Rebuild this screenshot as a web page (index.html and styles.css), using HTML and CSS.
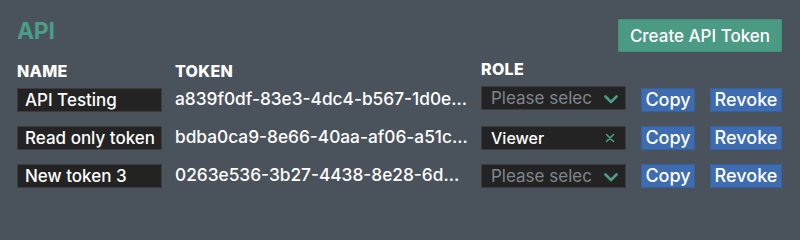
FILE: index.html
```html
<!DOCTYPE html>
<html>
<head>
<meta charset="utf-8">
<link rel="stylesheet" href="styles.css">
</head>
<body>
<div class="page">
  <div class="topbar">
    <h1 class="title">API</h1>
    <button class="btn-create">Create API Token</button>
  </div>
  <div class="tokens">
    <div class="row head">
      <div class="th">NAME</div>
      <div class="th">TOKEN</div>
      <div class="th role-head">ROLE</div>
      <div></div>
      <div></div>
    </div>
    <div class="row">
      <div class="name-input">API Testing</div>
      <div class="token">a839f0df-83e3-4dc4-b567-1d0e...</div>
      <div class="select first"><span class="placeholder">Please selec</span><svg class="chev" viewBox="0 0 14 9"><path d="M1.5 1.5 L7 7 L12.5 1.5" fill="none" stroke="#4a9d87" stroke-width="2.6" stroke-linecap="round" stroke-linejoin="round"/></svg></div>
      <div><button class="btn-blue copy">Copy</button></div>
      <div><button class="btn-blue revoke">Revoke</button></div>
    </div>
    <div class="row">
      <div class="name-input">Read only token</div>
      <div class="token">bdba0ca9-8e66-40aa-af06-a51c...</div>
      <div class="select"><span class="value">Viewer</span><svg class="clear" viewBox="0 0 10 10"><path d="M1.5 1.5 L8.5 8.5 M8.5 1.5 L1.5 8.5" fill="none" stroke="#4a9d87" stroke-width="1.6" stroke-linecap="round"/></svg></div>
      <div><button class="btn-blue copy">Copy</button></div>
      <div><button class="btn-blue revoke">Revoke</button></div>
    </div>
    <div class="row">
      <div class="name-input">New token 3</div>
      <div class="token">0263e536-3b27-4438-8e28-6d...</div>
      <div class="select"><span class="placeholder">Please selec</span><svg class="chev" viewBox="0 0 14 9"><path d="M1.5 1.5 L7 7 L12.5 1.5" fill="none" stroke="#4a9d87" stroke-width="2.6" stroke-linecap="round" stroke-linejoin="round"/></svg></div>
      <div><button class="btn-blue copy">Copy</button></div>
      <div><button class="btn-blue revoke">Revoke</button></div>
    </div>
  </div>
</div>
</body>
</html>
```

FILE: styles.css
```css
html, body {
  margin: 0;
  padding: 0;
  background: #4a535c;
}
body {
  font-family: Inter, "Liberation Sans", sans-serif;
  color: #ffffff;
  width: 800px;
  height: 216px;
  overflow: hidden;
}
.page {
  padding: 17px 18px 0 17px;
}
.topbar {
  display: flex;
  justify-content: space-between;
  align-items: flex-start;
}
.title {
  margin: 0;
  font-size: 23px;
  line-height: 28px;
  font-weight: 700;
  color: #4a9d87;
  letter-spacing: -0.3px;
}
.btn-create {
  margin-top: 2px;
  height: 33px;
  width: 164px;
  padding: 0;
  border: 1px solid #458f7a;
  background: #4b9a83;
  color: #ffffff;
  font-family: Inter, "Liberation Sans", sans-serif;
  font-size: 17px;
  font-weight: 500;
  border-radius: 1px;
}
.tokens {
  margin-top: 10px;
  display: flex;
  flex-direction: column;
}
.row {
  display: grid;
  grid-template-columns: 158px 306px 160px 69px 72px;
  align-items: start;
}
.row + .row {
  margin-top: 14px;
}
.row.head {
  margin-bottom: -7px;
}
.th {
  font-size: 16px;
  line-height: 19px;
  font-weight: 800;
  letter-spacing: 0.3px;
}
.role-head {
  margin-top: -2px;
}
.name-input {
  box-sizing: border-box;
  width: 145px;
  height: 24px;
  background: #232323;
  border: 1px solid #3c3c3c;
  padding-left: 7px;
  font-size: 17px;
  font-weight: 500;
  line-height: 22px;
  white-space: nowrap;
  overflow: hidden;
}
.token {
  width: 293px;
  font-size: 17.3px;
  font-weight: 500;
  line-height: 22px;
  white-space: nowrap;
  overflow: hidden;
}
.select {
  box-sizing: border-box;
  width: 145px;
  height: 24px;
  background: #232323;
  border: 1px solid #3c3c3c;
  padding: 0 6px 0 9px;
  display: flex;
  align-items: center;
  justify-content: space-between;
  font-size: 17px;
}
.select.first {
  margin-top: -2px;
}
.placeholder {
  color: #80868c;
  white-space: nowrap;
}
.value {
  color: #ffffff;
  font-size: 16px;
  font-weight: 500;
}
.chev {
  width: 14px;
  height: 9px;
  margin-right: 1px;
  margin-top: 2px;
}
.clear {
  width: 10px;
  height: 10px;
  margin-right: 4px;
}
.btn-blue {
  box-sizing: border-box;
  height: 24px;
  padding: 0;
  background: #3d6cb0;
  border: 1px solid #37609c;
  color: #ffffff;
  font-family: Inter, "Liberation Sans", sans-serif;
  font-size: 18px;
  font-weight: 500;
  line-height: 22px;
}
.copy {
  width: 54px;
}
.revoke {
  width: 72px;
}
```
